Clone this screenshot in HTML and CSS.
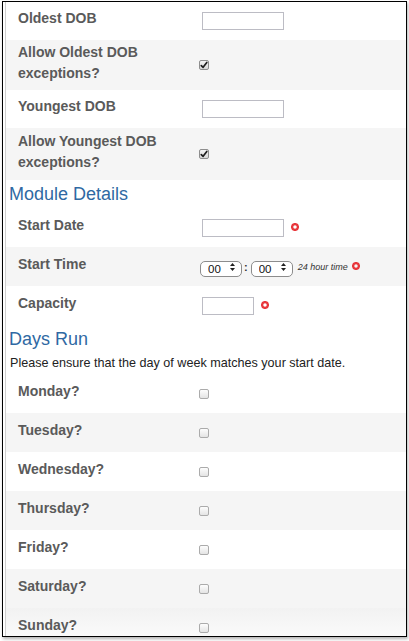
FILE: index.html
```html
<!DOCTYPE html>
<html>
<head>
<meta charset="utf-8">
<link rel="stylesheet" href="styles.css">
</head>
<body>
<div class="frame">
  <div class="inner">
    <div class="row r38">
      <div class="label">Oldest DOB</div>
      <div class="field"><input class="text" type="text"></div>
    </div>
    <div class="row alt r50">
      <div class="label">Allow Oldest DOB exceptions?</div>
      <div class="field"><span class="cb checked"><svg width="8" height="8" viewBox="0 0 8 8"><path d="M1.3 4.6 L3.1 6.3 L6.8 1.4" fill="none" stroke="#1e1e1e" stroke-width="1.7" stroke-linecap="round" stroke-linejoin="round"/></svg></span></div>
    </div>
    <div class="row r38">
      <div class="label">Youngest DOB</div>
      <div class="field"><input class="text" type="text"></div>
    </div>
    <div class="row alt r52">
      <div class="label">Allow Youngest DOB exceptions?</div>
      <div class="field"><span class="cb checked"><svg width="8" height="8" viewBox="0 0 8 8"><path d="M1.3 4.6 L3.1 6.3 L6.8 1.4" fill="none" stroke="#1e1e1e" stroke-width="1.7" stroke-linecap="round" stroke-linejoin="round"/></svg></span></div>
    </div>

    <h2 class="section">Module Details</h2>

    <div class="row">
      <div class="label">Start Date</div>
      <div class="field"><input class="text" type="text"><svg class="req" width="8" height="8" viewBox="0 0 8 8"><circle cx="4" cy="4" r="2.9" fill="none" stroke="#e8373c" stroke-width="2.3"/></svg></div>
    </div>
    <div class="row alt">
      <div class="label">Start Time</div>
      <div class="field time">
        <span class="sel"><select><option>00</option></select><svg width="5" height="8" viewBox="0 0 5 8"><path d="M2.5 0 L5 3 L0 3 Z M0 5 L5 5 L2.5 8 Z" fill="#222"/></svg></span>
        <span class="colon">:</span>
        <span class="sel"><select><option>00</option></select><svg width="5" height="8" viewBox="0 0 5 8"><path d="M2.5 0 L5 3 L0 3 Z M0 5 L5 5 L2.5 8 Z" fill="#222"/></svg></span>
        <span class="hint">24 hour time</span>
        <svg class="req small" width="8" height="8" viewBox="0 0 8 8"><circle cx="4" cy="4" r="2.9" fill="none" stroke="#e8373c" stroke-width="2.3"/></svg>
      </div>
    </div>
    <div class="row">
      <div class="label">Capacity</div>
      <div class="field"><input class="text short" type="text"><svg class="req" width="8" height="8" viewBox="0 0 8 8"><circle cx="4" cy="4" r="2.9" fill="none" stroke="#e8373c" stroke-width="2.3"/></svg></div>
    </div>

    <h2 class="section">Days Run</h2>
    <p class="note">Please ensure that the day of week matches your start date.</p>

    <div class="row">
      <div class="label">Monday?</div>
      <div class="field"><span class="cb"></span></div>
    </div>
    <div class="row alt">
      <div class="label">Tuesday?</div>
      <div class="field"><span class="cb"></span></div>
    </div>
    <div class="row">
      <div class="label">Wednesday?</div>
      <div class="field"><span class="cb"></span></div>
    </div>
    <div class="row alt">
      <div class="label">Thursday?</div>
      <div class="field"><span class="cb"></span></div>
    </div>
    <div class="row">
      <div class="label">Friday?</div>
      <div class="field"><span class="cb"></span></div>
    </div>
    <div class="row alt">
      <div class="label">Saturday?</div>
      <div class="field"><span class="cb"></span></div>
    </div>
    <div class="row last">
      <div class="label">Sunday?</div>
      <div class="field"><span class="cb"></span></div>
    </div>
  </div>
</div>
</body>
</html>
```

FILE: styles.css
```css
html, body {
  margin: 0;
  padding: 0;
  background: #fff;
}

body {
  width: 409px;
  height: 641px;
  overflow: hidden;
  font-family: "Liberation Sans", Arial, sans-serif;
}

.frame {
  margin: 1px 0 0 2px;
  width: 405px;
  height: 636px;
  box-sizing: border-box;
  border: 1px solid #000;
  overflow: hidden;
  box-shadow: 1px 2px 3px rgba(0, 0, 0, 0.3);
}

.inner {
  margin-left: 2px;
  border-left: 1px solid #cfcfcf;
  height: 100%;
}

.row {
  display: flex;
  align-items: center;
  height: 39px;
}

.row.r38 { height: 38px; }
.row.r50 { height: 50px; }
.row.r52 { height: 52px; }

.row.alt {
  background: #f5f5f5;
}

.row.last {
  background: linear-gradient(to bottom, #f2f2f2, #fafafa 70%, #f6f6f6);
}

.label {
  flex: none;
  width: 181px;
  padding-left: 12px;
  padding-bottom: 5px;
  font-weight: bold;
  font-size: 14px;
  line-height: 21px;
  color: #5a5a5a;
}

.field {
  display: flex;
  align-items: center;
}

.text {
  box-sizing: border-box;
  width: 82px;
  height: 18px;
  margin: 0 0 0 3px;
  padding: 0;
  border: 1px solid #bcbcc4;
  background: #fff;
}

.text.short {
  width: 52px;
}

.req {
  margin-left: 7px;
  margin-top: -1px;
}

.req.small {
  margin-left: 4px;
}

.cb {
  box-sizing: border-box;
  width: 10px;
  height: 10px;
  border: 1px solid #ababab;
  border-radius: 2px;
  background: linear-gradient(to bottom, #fdfdfd, #e4e4e4);
  display: flex;
  align-items: center;
  justify-content: center;
}

.cb.checked {
  border-color: #8e8e8e;
  background: linear-gradient(to bottom, #f4f4f4, #d9d9d9);
}

.time {
  margin-left: 1px;
}

.sel {
  position: relative;
  display: inline-block;
  height: 16px;
}

.sel select {
  -webkit-appearance: none;
  appearance: none;
  box-sizing: border-box;
  width: 42px;
  height: 16px;
  margin: 0;
  padding: 0 0 0 7px;
  border: 1px solid #8c8c8c;
  border-radius: 5px;
  background: #fff;
  font-family: "Liberation Sans", Arial, sans-serif;
  font-size: 11.5px;
  line-height: 14px;
  color: #111;
}

.sel svg {
  position: absolute;
  right: 7px;
  top: 4px;
}

.colon {
  font-size: 11px;
  font-weight: bold;
  color: #333;
  margin: 0 3px 0 2px;
}

.hint {
  margin-left: 5px;
  font-size: 9px;
  font-style: italic;
  color: #333;
}

.section {
  margin: 0;
  padding-left: 3px;
  font-size: 18px;
  font-weight: normal;
  line-height: 28px;
  color: #2f69a3;
}

.note {
  margin: 0;
  padding-left: 4px;
  font-size: 12.6px;
  line-height: 21px;
  color: #222;
}
```
